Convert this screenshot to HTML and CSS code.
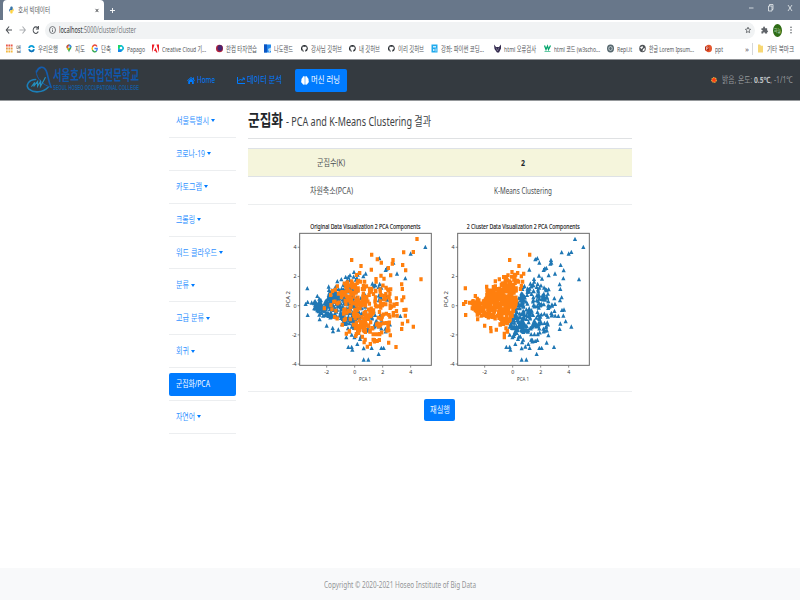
FILE: index.html
```html
<!DOCTYPE html>
<html lang="ko">
<head>
<meta charset="utf-8">
<title>호서 빅데이터</title>
<link rel="stylesheet" href="styles.css">
</head>
<body>
<svg width="0" height="0" class="defs">
  <symbol id="gh" viewBox="0 0 16 16"><path fill="#24292e" d="M8 0a8 8 0 0 0-2.500 15.600c.4.1.5-.2.5-.4v-1.600c-2.200.5-2.700-.9-2.700-.9-.4-.9-.9-1.200-.9-1.200-.7-.5.1-.5.1-.5.8.1 1.200.8 1.200.8.7 1.300 1.900.9 2.300.7.1-.5.3-.9.5-1.100-1.800-.2-3.600-.9-3.600-4 0-.9.3-1.600.8-2.100-.1-.2-.4-1 .1-2.100 0 0 .7-.2 2.200.8a7.500 7.500 0 0 1 4 0c1.500-1 2.200-.8 2.200-.8.4 1.100.1 1.900.1 2.100.5.6.8 1.300.8 2.100 0 3.100-1.900 3.700-3.700 3.900.3.3.6.8.6 1.500v2.200c0 .2.1.5.5.4A8 8 0 0 0 8 0z"/></symbol>
</svg>

<header class="browser">
  <div class="tabs">
    <div class="tab">
      <svg class="py" viewBox="0 0 16 16" preserveAspectRatio="none"><path fill="#3674a8" d="M4 8V4c0-2 1-3 4-3s4 1 4 3v2c0 2-1 2-3 2H6c-2 0-2 1-2 3H2C0 11 0 5 4 5z"/><path fill="#ffd33f" d="M12 6v4c0 4-1 5-4 5s-4-1-4-3v-1c0-2 1-3 3-3h3c2 0 2-1 2-3h1c3 0 3 6 0 6z"/></svg>
      <span class="fit tabname" data-w="32">호서 빅데이터</span>
      <svg class="x" viewBox="0 0 10 10"><path d="M1.500 1l7 8M8.500 1l-7 8"/></svg>
    </div>
    <svg class="plus" viewBox="0 0 10 12"><path d="M5 1v10M0 6h10"/></svg>
    <svg class="winbtns" viewBox="0 0 45 10"><path d="M1 5h4.500M20.500 3h3.500v5h-3.500zM21.500 3V1.500h3.500v5h-1M40 2l4 6M44 2l-4 6"/></svg>
  </div>
  <div class="toolbar">
    <svg class="navbtns" viewBox="0 0 36 12"><g fill="none" stroke-width="1.100"><path stroke="#4d5156" d="M7 6H1.500M4.100 2.500L1.300 6l2.800 3.500"/><path stroke="#adb0b4" d="M14.500 6h5.500M17.500 2.500L20.300 6l-2.800 3.500"/><path stroke="#4d5156" d="M32.800 4A2.600 3.300 0 1 0 33.200 7.500M33.400 2v3h-2.500"/></g></svg>
    <div class="address">
      <svg class="info" viewBox="0 0 14 16"><ellipse cx="7" cy="8" rx="6" ry="7"/><path d="M7 7v5M7 4v1.500"/></svg>
      <span class="fit" data-w="77"><b class="host">localhost</b>:5000/cluster/cluster</span>
      <svg class="star" viewBox="0 0 16 18"><path d="M8 1.500l2 5 5 .6-3.800 4L12.300 16 8 13.300 3.700 16l1.100-4.900L1 7.100l5-.6z"/></svg>
    </div>
    <svg class="puzzle" viewBox="0 0 16 18"><path fill="#5f6368" d="M1 5h4C4 1 9 0 9 3v2h5v5c3 0 3 4 0 4v3H9c0-4-4-4-4 0H1v-5c4 0 4-3 0-3z"/></svg>
    <div class="avatar"><span class="fit" data-w="7">하늘</span></div>
    <svg class="dots" viewBox="0 0 4 16"><g fill="#5f6368"><circle cx="2" cy="2.500" r="1.600"/><circle cx="2" cy="8" r="1.600"/><circle cx="2" cy="13.500" r="1.600"/></g></svg>
  </div>
  <nav class="bookmarks">
    <a><svg viewBox="0 0 14 16"><g stroke-width="3.600" stroke-dasharray="3.600 1.200"><path stroke="#ea5a4c" d="M0 2h14"/><path stroke="#e7974a" d="M0 8h14"/><path stroke="#f4b942" d="M0 14h14"/></g></svg><span class="fit" data-w="5">앱</span></a>
    <a><svg viewBox="0 0 14 16"><ellipse cx="7" cy="8" rx="4.800" ry="5.500" fill="none" stroke="#0f9fd8" stroke-width="3.500"/><path d="M0 8h14" stroke="#fff" stroke-width="2"/><path d="M2.500 11a5 5 0 0 0 9 0" stroke="#1670b8" stroke-width="3" fill="none"/></svg><span class="fit" data-w="20">우리은행</span></a>
    <a class="slim"><svg viewBox="0 0 12 16"><path fill="#34a853" d="M6 16C5 11 1 9 1 5a5 5 0 0 1 10 0c0 4-4 6-5 11z"/><path fill="#4285f4" d="M6 0a5 5 0 0 1 5 4L5 9 2 8z"/><path fill="#ea4335" d="M1 5C1 2 3 0 6 0l-1 4-3 4z"/><path fill="#fbbc04" d="M2 8l3-3 2 3-3 3z"/><circle cx="6" cy="5" r="1.700" fill="#fff"/></svg><span class="fit" data-w="10">지도</span></a>
    <a><svg viewBox="0 0 14 16"><g fill="none" stroke-width="2.700"><path stroke="#ea4335" d="M12 4A5 6 0 0 0 3 5"/><path stroke="#fbbc04" d="M3 5a6 6 0 0 0 0 6"/><path stroke="#34a853" d="M3 11a5 6 0 0 0 8 2"/><path stroke="#4285f4" d="M7 8h5.500c0 2-.5 4-2 5"/></g></svg><span class="fit" data-w="10">단축</span></a>
    <a class="slim"><svg viewBox="0 0 14 16"><path fill="#13bdd7" d="M0 0h9l5 5v4l-5 6H0z"/><path fill="#1ed760" d="M0 0h6v8H0z"/><path fill="#1687e8" d="M0 11h10l-3 5H0z"/><circle cx="7" cy="7" r="3" fill="#fff"/></svg><span class="fit" data-w="18">Papago</span></a>
    <a class="long"><svg viewBox="0 0 14 16"><path fill="#ed1c24" d="M0 0h5L0 16zM9 0h5v16zM7 6l4 10H8l-1-3H4z"/></svg><span class="fit" data-w="44">Creative Cloud 기...</span></a>
    <a><svg viewBox="0 0 14 16"><ellipse cx="7" cy="8" rx="7" ry="7.500" fill="#b3223b"/><ellipse cx="8" cy="7" rx="5" ry="6" fill="#48246f"/></svg><span class="fit" data-w="31">한컴 타자연습</span></a>
    <a><svg viewBox="0 0 14 16"><path fill="#2188ec" d="M0 0h14v16H0z"/><path fill="#0c55c2" d="M0 0h6v16H0z"/><path fill="#b7dcfa" d="M8 9l6-3v6l-4 4z"/></svg><span class="fit" data-w="19">나도랜드</span></a>
    <a><svg><use href="#gh"/></svg><span class="fit" data-w="31">강사님 깃허브</span></a>
    <a><svg><use href="#gh"/></svg><span class="fit" data-w="21">내 깃허브</span></a>
    <a><svg><use href="#gh"/></svg><span class="fit" data-w="26">이리 깃허브</span></a>
    <a class="long"><svg viewBox="0 0 14 16"><path fill="#20aaed" d="M1 0h12v16H1z"/><path fill="#c9ecff" d="M4 3h6v3H4zM4 9h3v4H4zM9 8h2v6H9z"/></svg><span class="fit" data-w="43">강좌: 파이썬 코딩...</span></a>
    <a><svg viewBox="0 0 14 16"><path fill="#32294d" d="M0 0l4 5h6l4-5v8l-4 8H6L1 9z"/><path d="M4 6l3 7 3-7" stroke="#a5a0b9" fill="none"/></svg><span class="fit" data-w="32">html 오류검사</span></a>
    <a><svg viewBox="0 0 14 16"><path d="M1 2l3 8 3-7 2 7 4-8" stroke="#04a66d" stroke-width="2.500" fill="none"/><path d="M1 14h12" stroke="#64c9a4" stroke-width="2"/></svg><span class="fit" data-w="46">html 코드 (w3scho...</span></a>
    <a><svg viewBox="0 0 14 16"><ellipse cx="7" cy="8" rx="7" ry="8" fill="#56676e"/><ellipse cx="7" cy="8" rx="3.500" ry="4" fill="none" stroke="#dce6e9" stroke-width="1.500"/></svg><span class="fit" data-w="15">Repl.it</span></a>
    <a class="long"><svg viewBox="0 0 14 16"><ellipse cx="7" cy="8" rx="6.500" ry="7.500" fill="#505458"/><path fill="#fff" d="M2 6l5-3 1 3-3 3zM8 9l4-2-1 5-4 2z"/></svg><span class="fit" data-w="45">한글 Lorem Ipsum...</span></a>
    <a><svg viewBox="0 0 14 16"><ellipse cx="7.500" cy="8" rx="6.500" ry="7.500" fill="#e4572e"/><path fill="#b92b12" d="M0 4h8v8H0z"/><path fill="none" stroke="#fff" d="M3 11V5h2a1.500 1.500 0 0 1 0 3H3"/></svg><span class="fit" data-w="8">ppt</span></a>
    <span class="more fit" data-w="4">»</span>
    <a class="other"><svg viewBox="0 0 12 16" preserveAspectRatio="none"><path fill="#f7d774" d="M0 1h5l2 2h5v12H0z"/></svg><span class="fit" data-w="27">기타 북마크</span></a>
  </nav>
</header>

<header class="navbar">
  <div class="brand">
    <svg viewBox="0 0 28 29"><g fill="none" stroke-linecap="round"><path stroke="#135caf" stroke-width="1.700" d="M11 6C13 1 18-1 21 5c2 5 2 10 5 17"/><path stroke="#135caf" stroke-width="1" d="M10.500 5c0 8 7 15 15.500 17"/><path stroke="#1c7fb9" stroke-width="1.600" d="M10 14C3 14-1 20 3 24c5 4 14 4 20-2"/><path stroke="#248ebc" stroke-width="1.200" d="M6 21l3-4-1 4 4-5v5l3-5v5l4-7M20 12l-1 2"/></g></svg>
    <div class="school"><b class="fit ko" data-w="86">서울호서직업전문학교</b><b class="fit en" data-w="86">SEOUL HOSEO OCCUPATIONAL COLLEGE</b></div>
  </div>
  <a class="home"><svg viewBox="0 0 16 16"><path fill="#007bff" d="M8 1L0 8l1 1 7-6 7 6 1-1-2-2V2h-2v2zM8 4L2.500 9v6H6v-4h4v4h3.500V9z"/></svg><span class="fit" data-w="18">Home</span></a>
  <a class="data"><svg viewBox="0 0 16 16"><path stroke="#007bff" stroke-width="2" fill="none" d="M1 1v13h15M3 9l4-4 3 3 4-5M11 3h3.500v4"/></svg><span class="fit" data-w="35">데이터 분석</span></a>
  <a class="ml"><svg viewBox="0 0 16 16" preserveAspectRatio="none"><path fill="#fff" d="M7.500 1C5-.5 3 1 3 3 1 4 .5 6 1 7.500 0 9 0 12 2.500 13c1 3 4 3 5 1.500zM8.500 1C11-.5 13 1 13 3c2 1 2.500 3 2 4.500 1 1.500 1 4.500-1.500 5.500-1 3-4 3-5 1.500z"/></svg><span class="fit" data-w="29">머신 러닝</span></a>
  <div class="weather"><svg viewBox="0 0 14 16"><circle cx="7" cy="8" r="5.500" fill="#ff3b14" stroke="#f1b13b" stroke-width="2.500" stroke-dasharray="3 1.300"/></svg><span class="fit" data-w="71">밝음, 온도: <b>0.5℃</b>, -1/1℃</span></div>
</header>

<div class="page">
  <aside class="side">
    <a><span class="fit" data-w="33">서울특별시</span><i></i></a>
    <a><span class="fit" data-w="29">코로나-19</span><i></i></a>
    <a><span class="fit" data-w="26">카토그램</span><i></i></a>
    <a><span class="fit" data-w="19">크롤링</span><i></i></a>
    <a><span class="fit" data-w="41">워드 클라우드</span><i></i></a>
    <a><span class="fit" data-w="13">분류</span><i></i></a>
    <a><span class="fit" data-w="28">고급 분류</span><i></i></a>
    <a><span class="fit" data-w="13">회귀</span><i></i></a>
    <a class="active"><span class="fit" data-w="34">군집화/PCA</span></a>
    <a><span class="fit" data-w="19">자연어</span><i></i></a>
  </aside>
  <main>
    <h1><b class="fit" data-w="35">군집화</b><span class="fit" data-w="145">- PCA and K-Means Clustering 결과</span></h1>
    <div class="table">
      <div class="row head"><div><span class="fit" data-w="28">군집수(K)</span></div><div><b class="fit" data-w="4">2</b></div></div>
      <div class="row"><div><span class="fit" data-w="43">차원축소(PCA)</span></div><div><span class="fit" data-w="58">K-Means Clustering</span></div></div>
    </div>
    <div class="charts">
      <svg id="original" viewBox="0 0 474 510"></svg>
      <svg id="clustered" viewBox="0 0 474 510"></svg>
    </div>
    <div class="actions"><button><span class="fit" data-w="20">재실행</span></button></div>
  </main>
</div>
<footer><span class="fit" data-w="152">Copyright © 2020-2021 Hoseo Institute of Big Data</span></footer>
<script src="app.js"></script>
</body>
</html>
```
FILE: styles.css
```css
* { box-sizing: border-box; }
body {
  margin: 0; width: 800px; height: 600px; overflow: hidden;
  display: flex; flex-direction: column; background: #fff; color: #212529;
  font: 9px/12px "Noto Sans", "Noto Sans CJK KR", sans-serif;
}
svg { display: block; flex: none; overflow: visible; }
.defs { position: absolute; }
.fit { display: inline-block; white-space: nowrap; transform-origin: 0 50%; flex: none; }

.browser { height: 60px; flex: none; border-bottom: 1px solid #8e9094; }
.tabs { height: 20px; background: #68778a; display: flex; align-items: center; }
.tab { width: 101px; height: 20px; margin-left: 3px; padding-left: 6px; background: #fff; border-radius: 4px 4px 0 0; display: flex; align-items: center; }
.py { width: 5px; height: 8px; margin-right: 4px; }
.tabname { font-size: 7.5px; color: #55585c; }
.x { width: 4px; height: 5px; margin-left: 44.500px; fill: none; stroke: #3c4043; stroke-width: 2.200; }
.plus { width: 5px; height: 7px; margin-left: 6px; fill: none; stroke: #fff; stroke-width: 1.8; }
.winbtns { width: 45px; height: 10px; margin: -4px 7px 0 auto; fill: none; stroke: #e9ecef; stroke-width: .8; }
.toolbar { height: 20px; display: flex; align-items: center; }
.navbtns { width: 36px; height: 12px; margin-left: 5px; }
.address { width: 710px; height: 17px; margin-left: 4px; border-radius: 9px; background: #f1f3f4; display: flex; align-items: center; padding-left: 4px; color: #73777b; font-size: 8px; }
.host { font-weight: 400; color: #303236; }
.info { width: 7px; height: 8px; margin-right: 3px; fill: none; stroke: #55595e; stroke-width: 1.6; }
.star { width: 6px; height: 8px; margin: 0 4.500px 0 auto; fill: none; stroke: #4d5156; stroke-width: 2; }
.puzzle { width: 7px; height: 8px; margin-left: 6px; }
.avatar { width: 9px; height: 13px; margin-left: 5px; border-radius: 50%; background: #2f6c16; color: #d9e8d4; font-size: 5px; display: flex; align-items: center; justify-content: center; }
.dots { width: 2px; height: 8px; margin-left: 8px; }
.bookmarks { height: 17px; display: flex; align-items: center; padding-left: 6px; color: #54575b; font-size: 7.5px; }
.bookmarks a { display: flex; align-items: center; gap: 3px; margin-right: 7.350px; }
.bookmarks a.long { margin-right: 10.500px; }
.bookmarks a.slim { margin-right: 6.300px; }
.bookmarks svg { width: 7px; height: 9px; }
.bookmarks .slim svg { width: 6px; }
.bookmarks .more { margin-left: auto; }
.bookmarks .other { margin: 0 6px 0 3px; padding-left: 5px; border-left: 1px solid #d5d7da; gap: 4px; }
.bookmarks .other svg { width: 5px; }

.navbar { height: 41px; flex: none; background: #343a40; border-bottom: 1px solid #95989b; display: flex; align-items: center; color: #007bff; }
.navbar a { display: flex; align-items: center; gap: 2px; height: 23px; }
.navbar a svg { width: 8px; height: 9px; }
.brand { display: flex; align-items: center; margin-left: 26px; color: #0f57ab; }
.brand svg { width: 27px; height: 28px; }
.school { display: flex; flex-direction: column; }
.school .ko { font-size: 13.500px; line-height: 15px; font-weight: 700; }
.school .en { font: 700 7px/9px "Liberation Sans", sans-serif; color: #155c9f; }
.home { margin-left: 48px; }
.data { margin-left: 22px; }
.navbar .ml { margin-left: 12.500px; width: 52px; padding-left: 6px; border-radius: 2px; background: #007bff; color: #fff; }
.weather { display: flex; align-items: center; margin: -1px 7px 0 auto; gap: 5px; color: #96999c; }
.weather b { color: #bfc1c4; }
.weather svg { width: 6px; height: 8px; }

.page { flex: 1; display: flex; padding-left: 168.500px; }
.side { width: 67.500px; padding-top: 4px; margin-right: 12px; font-size: 9px; color: #3092ff; }
.side a { height: 32.900px; padding-left: 7px; display: flex; align-items: center; gap: 2.500px; border-bottom: 1px solid #eceef0; }
.side i { border: 2.400px solid transparent; border-top: 3px solid #007bff; border-bottom: 0; }
.side .active { color: #fff; background: #007bff; height: 23px; margin: 4.500px 0 4.400px; border: 0; border-radius: 2px; }
.side .active + a { height: 33.500px; border-top: 1px solid #eceef0; }
main { width: 383.500px; }
h1 { margin: 0; height: 38px; padding-top: 9px; font-size: 12px; line-height: 24px; font-weight: 400; display: flex; gap: 3px; border-bottom: 1px solid #dfe1e3; color: #3d4145; }
h1 b { font-size: 16px; line-height: 21px; color: #212529; }
.table { margin-top: 9px; border-bottom: 1px solid #eceeef; }
.row { display: grid; grid-template-columns: 166px 217px; height: 28px; align-items: center; text-align: center; border-top: 1px solid #dee2e6; color: #4b4f53; }
.row > div { display: flex; justify-content: center; }
.row.head { background: #f5f5dc; }
.row b { color: #212529; }
.charts { display: flex; height: 187px; padding: 13px 0 0 32px; border-bottom: 1px solid #eceef0; }
.charts svg { width: 158px; height: 170px; }
.charts text { font-family: "Noto Sans", sans-serif; fill: #333; }
.charts .title { font-size: 22px; fill: #111; stroke: #111; stroke-width: .4px; }
.charts .tick { font-size: 16px; }
.charts .label { font-size: 16px; }
.actions { display: flex; justify-content: center; padding-top: 7px; }
button { width: 31px; height: 22px; padding: 0; border: 0; border-radius: 2px; background: #007bff; color: #e5f2ff; font: inherit; display: flex; align-items: center; justify-content: center; }
footer { height: 32px; flex: none; background: #f8f9fa; color: #939597; display: flex; align-items: center; justify-content: center; padding-top: 1px; }
```
FILE: app.js
```js
// Condense each label to its design width.
document.querySelectorAll('.fit').forEach(function (el) {
  var range = document.createRange();
  range.selectNodeContents(el);
  var natural = range.getBoundingClientRect().width;
  var w = parseFloat(el.dataset.w);
  el.style.width = w + 'px';
  el.style.transform = 'scaleX(' + w / natural + ')';
  el.style.textAlign = 'left';
});

var squares = [[411,63],[371,103],[400,102],[275,110],[215,126],[243,144],[292,124],[304,134],[339,126],[337,137],[368,141],[377,157],[423,184],[325,150],[274,155],[365,199],[367,213],[371,238],[366,247],[372,276],[378,275],[376,293],[383,310],[400,326],[367,317],[365,333],[348,387],[326,374],[331,352],[332,214],[349,241],[351,258],[340,285],[239,165],[303,173],[152,231],[133,271],[332,172],[312,182],[288,183],[262,386],[283,366],[298,366],[271,378]];
var triangles = [[436,87],[392,107],[298,121],[340,134],[351,167],[376,181],[320,152],[82,211],[83,252],[77,258],[95,254],[83,291],[361,294],[112,234],[140,323],[158,330],[159,340],[175,335],[205,387],[215,387],[217,395],[232,378],[251,425],[265,425],[296,408],[275,390],[304,390],[311,390],[119,304],[118,290],[146,206],[147,216],[172,190],[184,184],[197,177],[205,177],[210,172],[222,162],[250,175],[257,167],[317,156],[342,289],[251,391],[199,358]];
var points = squares.map(function (p) { return [p[0], p[1], 1]; })
  .concat(triangles.map(function (p) { return [p[0], p[1], 0]; }));

var seed = 20201;
function rnd() { seed = (seed * 16807) % 2147483647; return seed / 2147483647; }
var xs =  [100,120,150,175,200,222,260,300,335,355];
var top_ = [248,234,212,193,180,166,172,172,200,245];
var low = [269,292,308,322,352,364,384,370,348,290];
function at(arr, x) {
  for (var i = 1; i < xs.length; i++) {
    if (x <= xs[i]) return arr[i-1] + (arr[i] - arr[i-1]) * (x - xs[i-1]) / (xs[i] - xs[i-1]);
  }
  return arr[arr.length - 1];
}
function spread(n, x0, x1, share, bias) {
  for (var i = 0; i < n; i++) {
    var x = x0 + rnd() * (x1 - x0), t = at(top_, x), b = at(low, x);
    var y = t + (b - t) * Math.pow((rnd() + rnd() * .35) / 1.35, bias);
    points.push([x, y, rnd() < share ? 1 : 0]);
  }
}
spread(75, 102, 150, 0, 1);
spread(145, 145, 192, .12, 1.15);
spread(190, 190, 235, .38, 1.2);
spread(90, 225, 260, .7, .95);
spread(115, 250, 305, .72, .85);
spread(50, 300, 335, .85, .95);
spread(5, 335, 352, .8, 1);

function draw(id, title, kind) {
  var s = '<rect x="59" y="46" width="395" height="396" fill="none" stroke="#6b6b6b" stroke-width="3"/>';
  s += '<text class="title" x="256" y="34" text-anchor="middle" textLength="' + (id === 'original' ? 331 : 339) + '" lengthAdjust="spacingAndGlyphs">' + title + '</text>';
  [-2, 0, 2, 4].forEach(function (v) {
    var x = 224 + v * 42;
    s += '<path d="M' + x + ' 443v6" stroke="#555" stroke-width="2"/><text class="tick" x="' + x + '" y="467" text-anchor="middle">' + v + '</text>';
  });
  [-4, -2, 0, 2, 4].forEach(function (v) {
    var y = 263 - v * 43.8;
    s += '<path d="M53 ' + y + 'h6" stroke="#555" stroke-width="2"/><text class="tick" x="50" y="' + (y + 6) + '" text-anchor="end">' + v + '</text>';
  });
  s += '<text class="label" x="255" y="490" text-anchor="middle" textLength="36" lengthAdjust="spacingAndGlyphs">PCA 1</text>';
  s += '<text class="label" transform="translate(31 243) rotate(-90)" text-anchor="middle" textLength="48" lengthAdjust="spacingAndGlyphs">PCA 2</text>';
  var tri = '', sq = '';
  points.forEach(function (p) {
    var x = Number(p[0].toFixed(1)), y = Number(p[1].toFixed(1));
    if (kind(p)) sq += 'M' + (x - 5) + ' ' + (y - 6) + 'h10v12h-10z';
    else tri += 'M' + x + ' ' + (y - 7) + 'l6.3 13h-12.6z';
  });
  s += '<path fill="#1f77b4" d="' + tri + '"/><path fill="#ff7f0e" d="' + sq + '"/>';
  document.getElementById(id).innerHTML = s;
}
draw('original', 'Original Data Visualization 2 PCA Components', function (p) { return p[2]; });
draw('clustered', '2 Cluster Data Visualization 2 PCA Components', function (p) { return p[0] < 262 - (p[1] - 165) * .3; });
```
